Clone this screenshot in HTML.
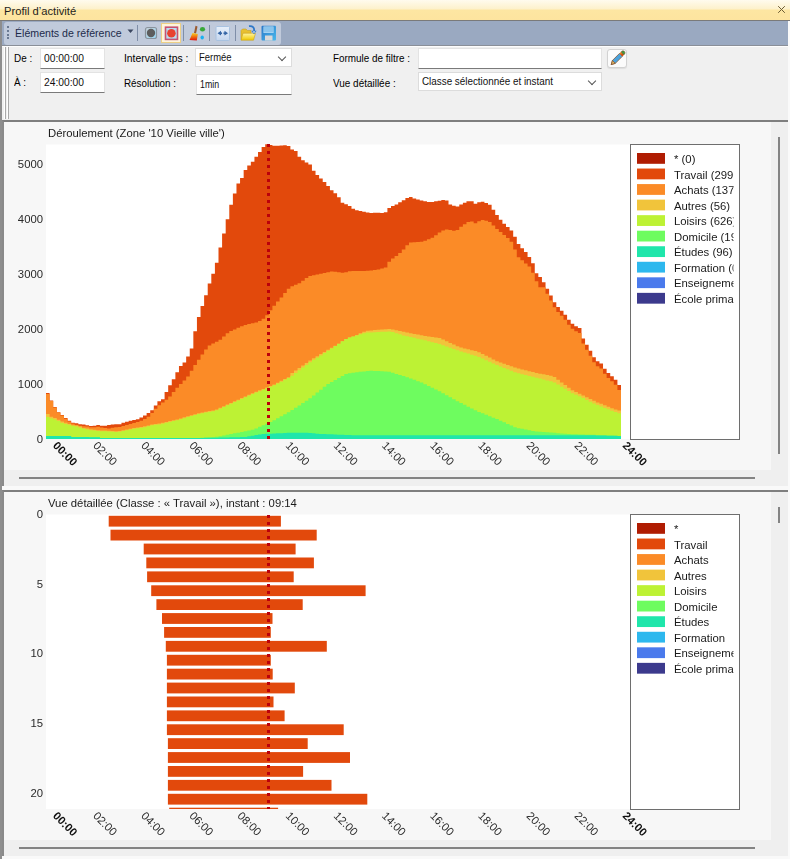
<!DOCTYPE html>
<html><head><meta charset="utf-8">
<style>
*{box-sizing:border-box}
html,body{margin:0;padding:0;width:790px;height:859px;overflow:hidden;background:#f0f0f0;font-family:"Liberation Sans",sans-serif;}
svg.main{will-change:transform}
.a{position:absolute}
#title{left:0;top:0;width:790px;height:21px;background:linear-gradient(#fffbee 0px,#fdf1cb 9px,#fde6a2 10px,#fde49f 20px);border-bottom:1px solid #7a7a7a}
#title span{position:absolute;left:4px;top:5px;font-size:11.2px;color:#1e1e1e}
#close{left:776px;top:4px;width:11px;height:11px}
#lb{left:0;top:21px;width:2px;height:839px;background:#8e8e8e}
#rb{left:788px;top:21px;width:2px;height:839px;background:#fafafa}
#tb{left:2px;top:21px;width:786px;height:25px;background:#9aa9c1;border-bottom:1px solid #8a8f98}
#tbin{left:4px;top:22px;width:277px;height:23px;background:#c0cadb;border-radius:3px}
.grip{left:7px;width:2px;height:2px;background:#6b7a92}
#tbtext{left:15px;top:27px;font-size:10.6px;color:#1d2a4a}
.sep{width:1px;height:16px;top:25px;background:#7f8ea8}
#form{left:2px;top:46px;width:786px;height:74px;background:#f0f0f0;border-top:1px solid #fdfdfd}
.flab{font-size:11px;color:#000;transform:scaleX(.9);transform-origin:0 0;white-space:nowrap}
.inp{background:#fff;border:1px solid #e3e3e3;border-bottom:1px solid #7a7a7a;font-size:11px;color:#111;padding-left:3px;line-height:18px;white-space:nowrap}
.sx{display:inline-block;transform:scaleX(.9);transform-origin:0 50%}
.cmb{background:#fff;border:1px solid #dcdcdc;font-size:11px;color:#111;padding-left:3px;line-height:17px;white-space:nowrap}
.chev{position:absolute;right:6px;top:5px;width:6px;height:6px;border-right:1px solid #555;border-bottom:1px solid #555;transform:rotate(45deg)}
#p1{left:2px;top:120px;width:786px;height:366px;background:#efefef;border-top:2px solid #7f7f7f;border-left:2px solid #8a8a8a}
#p2{left:2px;top:490px;width:786px;height:366px;background:#efefef;border-top:2px solid #7f7f7f;border-left:2px solid #8a8a8a}
#split{left:2px;top:486px;width:786px;height:4px;background:#f9f9f9}
#bot{left:2px;top:856px;width:786px;height:3px;background:#f9f9f9}
svg text{font-family:"Liberation Sans",sans-serif}
.lg{font-size:11.33px;fill:#1a1a1a}
.yl{font-size:11.3px;fill:#2a2a2a;text-anchor:end}
.xl{font-size:11.3px;fill:#2a2a2a}
.xl.b{font-weight:bold;fill:#111}
.ttl{font-size:11.3px;fill:#1a1a1a}
</style></head><body>
<div id="title" class="a"><span>Profil d’activité</span></div>
<svg id="close" class="a" viewBox="0 0 11 11"><path d="M2.2 2.2L8.8 8.8M8.8 2.2L2.2 8.8" stroke="#6b5b33" stroke-width="1"/></svg>
<div id="lb" class="a"></div>
<div id="rb" class="a"></div>
<div id="tb" class="a"></div>
<div id="tbin" class="a"></div>
<div class="a grip" style="top:26px"></div>
<div class="a grip" style="top:30px"></div>
<div class="a grip" style="top:34px"></div>
<div class="a grip" style="top:37px"></div>
<div id="tbtext" class="a">Éléments de référence</div>
<svg class="a" style="left:127px;top:29px" width="7" height="5"><path d="M0.5 0.5H6.5L3.5 4Z" fill="#3a4660"/></svg>
<div class="a sep" style="left:137px"></div>
<!-- icon1 gray circle -->
<svg class="a" style="left:144px;top:26px" width="14" height="14" viewBox="0 0 14 14"><defs><linearGradient id="g1" x1="0" y1="0" x2="1" y2="1"><stop offset="0" stop-color="#c8d0d8"/><stop offset="1" stop-color="#9ad8f4"/></linearGradient></defs><rect x="1.5" y="1.5" width="11" height="11" rx="2" fill="url(#g1)" stroke="#8a949e" stroke-width="1.2"/><circle cx="7" cy="7" r="4.2" fill="#5d5d5d"/></svg>
<!-- icon2 highlighted red -->
<div class="a" style="left:161px;top:23px;width:20px;height:20px;background:#fdf4dc;border:1px solid #eccf86"></div>
<svg class="a" style="left:164px;top:26px" width="15" height="15" viewBox="0 0 15 15"><rect x="1.5" y="1.2" width="12" height="12.2" fill="#b8dcf0" stroke="#c65272" stroke-width="1.6"/><circle cx="7.4" cy="7.2" r="4.3" fill="#e8412f"/></svg>
<div class="a sep" style="left:183px"></div>
<!-- brush -->
<svg class="a" style="left:188px;top:25px" width="18" height="17" viewBox="0 0 18 17"><defs><linearGradient id="gb" x1="0" y1="0" x2="0" y2="1"><stop offset="0" stop-color="#f8d020"/><stop offset="0.5" stop-color="#f07010"/><stop offset="1" stop-color="#e01010"/></linearGradient></defs><path d="M7.5 0.8L9.5 1.4L8 8.5L6 8Z" fill="#9a5a30"/><path d="M4.5 8L9.8 9L8.8 15.5L1.5 15Z" fill="url(#gb)"/><ellipse cx="14.5" cy="4.3" rx="2.6" ry="2.2" fill="#38a838"/><ellipse cx="14.2" cy="12.5" rx="1.7" ry="2.1" fill="#1ab0f0"/></svg>
<div class="a sep" style="left:209px"></div>
<!-- arrows -->
<svg class="a" style="left:215px;top:26px" width="16" height="16" viewBox="0 0 16 16"><defs><linearGradient id="ga" x1="0" y1="0" x2="0" y2="1"><stop offset="0" stop-color="#e8f0fa"/><stop offset="1" stop-color="#c4d6ee"/></linearGradient></defs><rect x="1" y="0.5" width="13.5" height="14" rx="1" fill="url(#ga)" stroke="#a8c2e0"/><path d="M2.5 7.2L6 4.8V9.6Z M13 7.2L9.5 4.8V9.6Z" fill="#3566a6"/><rect x="5" y="6.4" width="2" height="1.7" fill="#3566a6"/><rect x="8.5" y="6.4" width="2" height="1.7" fill="#3566a6"/></svg>
<div class="a sep" style="left:235px"></div>
<!-- folder -->
<svg class="a" style="left:240px;top:25px" width="17" height="17" viewBox="0 0 17 17"><defs><linearGradient id="gf" x1="0" y1="0" x2="0" y2="1"><stop offset="0" stop-color="#fff4a0"/><stop offset="1" stop-color="#f0c800"/></linearGradient></defs><path d="M1 14.5V5.5L2.5 4H6L7.5 5.5H11V14.5Z" fill="#e8c030" stroke="#c8a020" stroke-width="0.6"/><path d="M1 15.2L3 8.2H15.5L13.5 15.2Z" fill="url(#gf)" stroke="#c8a020" stroke-width="0.6"/><path d="M9 1.2C12.5 0.6 14.8 2.6 14 6.5" stroke="#2e78c8" stroke-width="1.8" fill="none"/><path d="M11.3 5.8L14 9.2L16.6 5.8Z" fill="#2e78c8"/><path d="M12.6 6.4L14 8L15.3 6.4Z" fill="#ffffff"/></svg>
<!-- floppy -->
<svg class="a" style="left:261px;top:25px" width="16" height="16" viewBox="0 0 16 16"><defs><linearGradient id="gfl" x1="0" y1="0" x2="1" y2="1"><stop offset="0" stop-color="#2a78c8"/><stop offset="1" stop-color="#48b8ec"/></linearGradient></defs><rect x="0.5" y="0.8" width="14.5" height="14.7" rx="1" fill="url(#gfl)"/><rect x="2.5" y="1.5" width="10" height="6.5" fill="#bfe0f6"/><rect x="3" y="2" width="9" height="5.5" fill="#8ac4ec"/><rect x="4" y="10.5" width="7.5" height="5" fill="#d8d8d8"/></svg>

<div id="form" class="a"></div>
<div class="a" style="left:4px;top:47px;width:1px;height:72px;background:#fff"></div>
<div class="a" style="left:5px;top:47px;width:1px;height:72px;background:#a9a9a9"></div>
<div class="a" style="left:7px;top:47px;width:1px;height:72px;background:#fff"></div>
<div class="a" style="left:8px;top:47px;width:1px;height:72px;background:#a9a9a9"></div>

<div class="a flab" style="left:14px;top:52px">De :</div>
<div class="a inp" style="left:40px;top:48px;width:65px;height:21px"><span class="sx" style="transform:scaleX(0.934)">00:00:00</span></div>
<div class="a flab" style="left:14px;top:76px">À :</div>
<div class="a inp" style="left:40px;top:72px;width:65px;height:21px"><span class="sx" style="transform:scaleX(0.934)">24:00:00</span></div>
<div class="a flab" style="transform:scaleX(0.940);left:124px;top:52px">Intervalle tps :</div>
<div class="a cmb" style="left:195px;top:48px;width:97px;height:19px"><span class="sx" style="transform:scaleX(0.860)">Fermée</span><span class="chev"></span></div>
<div class="a flab" style="transform:scaleX(0.895);left:124px;top:77px">Résolution :</div>
<div class="a inp" style="left:196px;top:74px;width:96px;height:21px"><span class="sx" style="transform:scaleX(0.800)">1min</span></div>
<div class="a flab" style="transform:scaleX(0.900);left:333px;top:52px">Formule de filtre :</div>
<div class="a inp" style="left:418px;top:48px;width:184px;height:21px"></div>
<div class="a flab" style="transform:scaleX(0.905);left:333px;top:77px">Vue détaillée :</div>
<div class="a cmb" style="left:418px;top:72px;width:184px;height:19px"><span class="sx" style="transform:scaleX(0.896)">Classe sélectionnée et instant</span><span class="chev"></span></div>
<div class="a" style="left:607px;top:49px;width:20px;height:19px;background:#fbfbfb;border:1px solid #d2d2d2;border-radius:3px;box-shadow:0 1px 1px rgba(0,0,0,0.08)"></div>
<svg class="a" style="left:602px;top:44px" width="30" height="30" viewBox="0 0 30 30"><g transform="translate(15.2,14.6) rotate(-45) scale(0.85)"><path d="M-10 0L-5.5 -2.4H6.2V2.4H-5.5Z" fill="#4aa2dc" stroke="#7a4a28" stroke-width="0.8"/><path d="M-10 0L-5.5 -2.4V2.4Z" fill="#dcb060" stroke="#7a4a28" stroke-width="0.7"/><rect x="6.2" y="-2.4" width="2.6" height="4.8" fill="#e07a18"/><rect x="6.2" y="0" width="2.6" height="2.4" fill="#d24a10"/><path d="M8.8 -2.4H9.6A2.4 2.4 0 0 1 9.6 2.4H8.8Z" fill="#3e9a3e" stroke="#7a4a28" stroke-width="0.6"/></g></svg>
<!-- Chart panel 1 -->
<div id="p1" class="a"></div>
<div class="a" style="left:4px;top:122px;width:767px;height:348px;background:#f7f7f7"></div>
<div class="a" style="left:19px;top:477px;width:736px;height:2px;background:#838383"></div>
<div class="a" style="left:778px;top:137px;width:2px;height:317px;background:#838383"></div>
<div id="split" class="a"></div>
<div id="p2" class="a"></div>
<div class="a" style="left:4px;top:492px;width:767px;height:348px;background:#f7f7f7"></div>
<div class="a" style="left:19px;top:847px;width:736px;height:2px;background:#838383"></div>
<div class="a" style="left:778px;top:507px;width:2px;height:16px;background:#838383"></div>
<div id="bot" class="a"></div>

<svg class="a main" style="left:0;top:0" width="790" height="859">
<rect x="46" y="144.5" width="584" height="294.5" fill="#fff"/>
<text x="48" y="137" class="ttl">Déroulement (Zone '10 Vieille ville')</text>
<text x="43" y="167.5" class="yl">5000</text>
<text x="43" y="222.5" class="yl">4000</text>
<text x="43" y="277.5" class="yl">3000</text>
<text x="43" y="332.5" class="yl">2000</text>
<text x="43" y="387.5" class="yl">1000</text>
<text x="43" y="443" class="yl">0</text>
<polygon points="46.00,393.00 49.59,393.00 49.59,400.38 53.19,400.38 53.19,407.07 56.78,407.07 56.78,412.17 60.38,412.17 60.38,414.88 63.97,414.88 63.97,417.97 67.56,417.97 67.56,420.77 71.16,420.77 71.16,422.77 74.75,422.77 74.75,423.29 78.34,423.29 78.34,424.28 81.94,424.28 81.94,424.49 85.53,424.49 85.53,425.30 89.12,425.30 89.12,425.92 92.72,425.92 92.72,425.67 96.31,425.67 96.31,425.07 99.91,425.07 99.91,425.78 103.50,425.78 103.50,425.68 107.09,425.68 107.09,425.02 110.69,425.02 110.69,424.59 114.28,424.59 114.28,424.30 117.88,424.30 117.88,424.30 121.47,424.30 121.47,422.66 125.06,422.66 125.06,421.68 128.66,421.68 128.66,420.71 132.25,420.71 132.25,419.91 135.84,419.91 135.84,419.13 139.44,419.13 139.44,417.43 143.03,417.43 143.03,415.54 146.62,415.54 146.62,413.07 150.22,413.07 150.22,410.25 153.81,410.25 153.81,405.49 157.41,405.49 157.41,401.22 161.00,401.22 161.00,399.20 164.59,399.20 164.59,392.02 168.19,392.02 168.19,385.33 171.78,385.33 171.78,379.34 175.38,379.34 175.38,372.36 178.97,372.36 178.97,366.03 182.56,366.03 182.56,362.44 186.16,362.44 186.16,356.49 189.75,356.49 189.75,348.55 193.34,348.55 193.34,331.16 196.94,331.16 196.94,316.90 200.53,316.90 200.53,306.12 204.12,306.12 204.12,295.15 207.72,295.15 207.72,283.58 211.31,283.58 211.31,273.64 214.91,273.64 214.91,262.79 218.50,262.79 218.50,247.38 222.09,247.38 222.09,233.38 225.69,233.38 225.69,219.33 229.28,219.33 229.28,204.64 232.88,204.64 232.88,193.50 236.47,193.50 236.47,183.40 240.06,183.40 240.06,177.88 243.66,177.88 243.66,170.02 247.25,170.02 247.25,165.41 250.84,165.41 250.84,161.86 254.44,161.86 254.44,156.63 258.03,156.63 258.03,151.89 261.62,151.89 261.62,147.08 265.22,147.08 265.22,144.25 268.81,144.25 268.81,145.00 272.41,145.00 272.41,145.81 276.00,145.81 276.00,145.86 279.59,145.86 279.59,145.38 283.19,145.38 283.19,145.30 286.78,145.30 286.78,146.01 290.38,146.01 290.38,149.60 293.97,149.60 293.97,150.89 297.56,150.89 297.56,156.85 301.16,156.85 301.16,160.36 304.75,160.36 304.75,162.57 308.34,162.57 308.34,164.54 311.94,164.54 311.94,170.74 315.53,170.74 315.53,174.98 319.12,174.98 319.12,178.52 322.72,178.52 322.72,182.12 326.31,182.12 326.31,186.03 329.91,186.03 329.91,190.19 333.50,190.19 333.50,193.24 337.09,193.24 337.09,197.35 340.69,197.35 340.69,202.82 344.28,202.82 344.28,204.32 347.88,204.32 347.88,206.10 351.47,206.10 351.47,208.87 355.06,208.87 355.06,210.29 358.66,210.29 358.66,210.91 362.25,210.91 362.25,211.69 365.84,211.69 365.84,212.59 369.44,212.59 369.44,213.02 373.03,213.02 373.03,212.83 376.62,212.83 376.62,212.76 380.22,212.76 380.22,212.95 383.81,212.95 383.81,212.26 387.41,212.26 387.41,207.99 391.00,207.99 391.00,206.09 394.59,206.09 394.59,204.54 398.19,204.54 398.19,202.34 401.78,202.34 401.78,200.17 405.38,200.17 405.38,198.04 408.97,198.04 408.97,197.07 412.56,197.07 412.56,198.52 416.16,198.52 416.16,199.56 419.75,199.56 419.75,200.46 423.34,200.46 423.34,201.24 426.94,201.24 426.94,201.95 430.53,201.95 430.53,201.97 434.12,201.97 434.12,201.33 437.72,201.33 437.72,200.69 441.31,200.69 441.31,199.95 444.91,199.95 444.91,200.51 448.50,200.51 448.50,204.49 452.09,204.49 452.09,205.75 455.69,205.75 455.69,206.58 459.28,206.58 459.28,204.57 462.88,204.57 462.88,202.81 466.47,202.81 466.47,201.30 470.06,201.30 470.06,201.37 473.66,201.37 473.66,203.77 477.25,203.77 477.25,202.26 480.84,202.26 480.84,201.76 484.44,201.76 484.44,203.06 488.03,203.06 488.03,204.77 491.62,204.77 491.62,209.63 495.22,209.63 495.22,215.02 498.81,215.02 498.81,219.81 502.41,219.81 502.41,223.86 506.00,223.86 506.00,226.88 509.59,226.88 509.59,230.39 513.19,230.39 513.19,236.87 516.78,236.87 516.78,244.06 520.38,244.06 520.38,248.26 523.97,248.26 523.97,251.90 527.56,251.90 527.56,257.08 531.16,257.08 531.16,263.32 534.75,263.32 534.75,273.20 538.34,273.20 538.34,276.89 541.94,276.89 541.94,282.13 545.53,282.13 545.53,288.65 549.12,288.65 549.12,295.44 552.72,295.44 552.72,302.22 556.31,302.22 556.31,307.01 559.91,307.01 559.91,310.67 563.50,310.67 563.50,314.75 567.09,314.75 567.09,319.70 570.69,319.70 570.69,323.73 574.28,323.73 574.28,326.14 577.88,326.14 577.88,328.09 581.47,328.09 581.47,338.57 585.06,338.57 585.06,344.86 588.66,344.86 588.66,350.80 592.25,350.80 592.25,357.23 595.84,357.23 595.84,361.35 599.44,361.35 599.44,363.41 603.03,363.41 603.03,368.67 606.62,368.67 606.62,372.92 610.22,372.92 610.22,376.34 613.81,376.34 613.81,379.76 617.41,379.76 617.41,384.98 621.00,384.98 621.00,439.00 46.00,439.00" fill="#e2490c"/>
<polygon points="46.00,394.00 49.59,394.00 49.59,400.98 53.19,400.98 53.19,407.60 56.78,407.60 56.78,412.44 60.38,412.44 60.38,415.57 63.97,415.57 63.97,418.63 67.56,418.63 67.56,421.39 71.16,421.39 71.16,423.45 74.75,423.45 74.75,424.78 78.34,424.78 78.34,425.67 81.94,425.67 81.94,426.17 85.53,426.17 85.53,426.53 89.12,426.53 89.12,427.18 92.72,427.18 92.72,427.36 96.31,427.36 96.31,426.82 99.91,426.82 99.91,427.39 103.50,427.39 103.50,428.06 107.09,428.06 107.09,428.42 110.69,428.42 110.69,427.70 114.28,427.70 114.28,427.34 117.88,427.34 117.88,427.03 121.47,427.03 121.47,426.00 125.06,426.00 125.06,424.97 128.66,424.97 128.66,424.05 132.25,424.05 132.25,423.08 135.84,423.08 135.84,422.05 139.44,422.05 139.44,420.75 143.03,420.75 143.03,418.97 146.62,418.97 146.62,416.87 150.22,416.87 150.22,413.01 153.81,413.01 153.81,408.66 157.41,408.66 157.41,405.34 161.00,405.34 161.00,402.58 164.59,402.58 164.59,399.82 168.19,399.82 168.19,396.42 171.78,396.42 171.78,392.11 175.38,392.11 175.38,387.79 178.97,387.79 178.97,384.03 182.56,384.03 182.56,380.44 186.16,380.44 186.16,376.57 189.75,376.57 189.75,370.82 193.34,370.82 193.34,365.08 196.94,365.08 196.94,359.63 200.53,359.63 200.53,354.51 204.12,354.51 204.12,349.39 207.72,349.39 207.72,345.39 211.31,345.39 211.31,343.60 214.91,343.60 214.91,341.80 218.50,341.80 218.50,339.77 222.09,339.77 222.09,336.55 225.69,336.55 225.69,333.34 229.28,333.34 229.28,330.97 232.88,330.97 232.88,329.39 236.47,329.39 236.47,327.80 240.06,327.80 240.06,326.22 243.66,326.22 243.66,324.88 247.25,324.88 247.25,324.12 250.84,324.12 250.84,323.37 254.44,323.37 254.44,322.61 258.03,322.61 258.03,320.96 261.62,320.96 261.62,318.69 265.22,318.69 265.22,315.15 268.81,315.15 268.81,310.23 272.41,310.23 272.41,305.63 276.00,305.63 276.00,301.56 279.59,301.56 279.59,297.43 283.19,297.43 283.19,293.12 286.78,293.12 286.78,288.81 290.38,288.81 290.38,286.23 293.97,286.23 293.97,284.79 297.56,284.79 297.56,283.36 301.16,283.36 301.16,280.76 304.75,280.76 304.75,278.11 308.34,278.11 308.34,276.06 311.94,276.06 311.94,275.30 315.53,275.30 315.53,274.55 319.12,274.55 319.12,273.79 322.72,273.79 322.72,273.00 326.31,273.00 326.31,272.21 329.91,272.21 329.91,271.42 333.50,271.42 333.50,271.86 337.09,271.86 337.09,272.33 340.69,272.33 340.69,272.81 344.28,272.81 344.28,272.18 347.88,272.18 347.88,271.28 351.47,271.28 351.47,271.00 355.06,271.00 355.06,271.00 358.66,271.00 358.66,271.00 362.25,271.00 362.25,271.00 365.84,271.00 365.84,270.81 369.44,270.81 369.44,270.40 373.03,270.40 373.03,269.98 376.62,269.98 376.62,269.40 380.22,269.40 380.22,268.46 383.81,268.46 383.81,267.51 387.41,267.51 387.41,261.73 391.00,261.73 391.00,258.52 394.59,258.52 394.59,256.11 398.19,256.11 398.19,253.12 401.78,253.12 401.78,249.52 405.38,249.52 405.38,245.35 408.97,245.35 408.97,242.42 412.56,242.42 412.56,242.18 416.16,242.18 416.16,241.93 419.75,241.93 419.75,241.69 423.34,241.69 423.34,240.70 426.94,240.70 426.94,239.27 430.53,239.27 430.53,237.83 434.12,237.83 434.12,235.16 437.72,235.16 437.72,232.46 441.31,232.46 441.31,230.52 444.91,230.52 444.91,229.38 448.50,229.38 448.50,230.04 452.09,230.04 452.09,230.70 455.69,230.70 455.69,229.92 459.28,229.92 459.28,226.86 462.88,226.86 462.88,224.24 466.47,224.24 466.47,222.02 470.06,222.02 470.06,221.57 473.66,221.57 473.66,223.30 477.25,223.30 477.25,221.26 480.84,221.26 480.84,219.91 484.44,219.91 484.44,220.81 488.03,220.81 488.03,222.03 491.62,222.03 491.62,225.62 495.22,225.62 495.22,228.91 498.81,228.91 498.81,231.94 502.41,231.94 502.41,234.91 506.00,234.91 506.00,238.12 509.59,238.12 509.59,241.76 513.19,241.76 513.19,249.60 516.78,249.60 516.78,257.25 520.38,257.25 520.38,260.35 523.97,260.35 523.97,263.41 527.56,263.41 527.56,266.58 531.16,266.58 531.16,272.82 534.75,272.82 534.75,281.32 538.34,281.32 538.34,287.14 541.94,287.14 541.94,287.13 545.53,287.13 545.53,293.65 549.12,293.65 549.12,300.44 552.72,300.44 552.72,307.22 556.31,307.22 556.31,312.01 559.91,312.01 559.91,315.67 563.50,315.67 563.50,319.75 567.09,319.75 567.09,324.70 570.69,324.70 570.69,328.73 574.28,328.73 574.28,331.14 577.88,331.14 577.88,333.09 581.47,333.09 581.47,343.57 585.06,343.57 585.06,349.86 588.66,349.86 588.66,355.80 592.25,355.80 592.25,362.23 595.84,362.23 595.84,366.35 599.44,366.35 599.44,368.41 603.03,368.41 603.03,373.67 606.62,373.67 606.62,377.92 610.22,377.92 610.22,381.34 613.81,381.34 613.81,384.76 617.41,384.76 617.41,389.98 621.00,389.98 621.00,439.00 46.00,439.00" fill="#fb8b27"/>
<polygon points="46.00,414.00 49.59,414.00 49.59,416.83 53.19,416.83 53.19,417.94 56.78,417.94 56.78,419.78 60.38,419.78 60.38,421.54 63.97,421.54 63.97,422.68 67.56,422.68 67.56,424.08 71.16,424.08 71.16,425.37 74.75,425.37 74.75,425.60 78.34,425.60 78.34,426.61 81.94,426.61 81.94,428.27 85.53,428.27 85.53,428.60 89.12,428.60 89.12,429.37 92.72,429.37 92.72,429.82 96.31,429.82 96.31,430.13 99.91,430.13 99.91,430.39 103.50,430.39 103.50,430.56 107.09,430.56 107.09,430.76 110.69,430.76 110.69,431.02 114.28,431.02 114.28,431.16 117.88,431.16 117.88,431.01 121.47,431.01 121.47,430.25 125.06,430.25 125.06,429.44 128.66,429.44 128.66,428.66 132.25,428.66 132.25,428.00 135.84,428.00 135.84,427.51 139.44,427.51 139.44,426.97 143.03,426.97 143.03,426.34 146.62,426.34 146.62,425.46 150.22,425.46 150.22,424.52 153.81,424.52 153.81,424.06 157.41,424.06 157.41,423.60 161.00,423.60 161.00,422.83 164.59,422.83 164.59,421.97 168.19,421.97 168.19,421.11 171.78,421.11 171.78,420.26 175.38,420.26 175.38,419.40 178.97,419.40 178.97,418.38 182.56,418.38 182.56,417.33 186.16,417.33 186.16,416.27 189.75,416.27 189.75,415.21 193.34,415.21 193.34,414.15 196.94,414.15 196.94,413.25 200.53,413.25 200.53,412.53 204.12,412.53 204.12,411.82 207.72,411.82 207.72,411.10 211.31,411.10 211.31,410.38 214.91,410.38 214.91,409.48 218.50,409.48 218.50,407.84 222.09,407.84 222.09,406.21 225.69,406.21 225.69,404.57 229.28,404.57 229.28,402.94 232.88,402.94 232.88,401.30 236.47,401.30 236.47,399.69 240.06,399.69 240.06,398.09 243.66,398.09 243.66,396.48 247.25,396.48 247.25,394.87 250.84,394.87 250.84,393.26 254.44,393.26 254.44,391.77 258.03,391.77 258.03,390.33 261.62,390.33 261.62,388.89 265.22,388.89 265.22,387.45 268.81,387.45 268.81,386.02 272.41,386.02 272.41,384.44 276.00,384.44 276.00,382.64 279.59,382.64 279.59,380.83 283.19,380.83 283.19,379.02 286.78,379.02 286.78,377.22 290.38,377.22 290.38,372.98 293.97,372.98 293.97,370.46 297.56,370.46 297.56,367.95 301.16,367.95 301.16,365.43 304.75,365.43 304.75,362.92 308.34,362.92 308.34,360.52 311.94,360.52 311.94,358.36 315.53,358.36 315.53,356.20 319.12,356.20 319.12,354.05 322.72,354.05 322.72,351.89 326.31,351.89 326.31,349.74 329.91,349.74 329.91,347.77 333.50,347.77 333.50,345.81 337.09,345.81 337.09,343.69 340.69,343.69 340.69,341.35 344.28,341.35 344.28,339.00 347.88,339.00 347.88,337.60 351.47,337.60 351.47,336.52 355.06,336.52 355.06,334.94 358.66,334.94 358.66,333.31 362.25,333.31 362.25,331.68 365.84,331.68 365.84,330.67 369.44,330.67 369.44,330.40 373.03,330.40 373.03,330.12 376.62,330.12 376.62,329.84 380.22,329.84 380.22,329.56 383.81,329.56 383.81,329.29 387.41,329.29 387.41,329.01 391.00,329.01 391.00,329.38 394.59,329.38 394.59,330.16 398.19,330.16 398.19,330.95 401.78,330.95 401.78,331.73 405.38,331.73 405.38,332.45 408.97,332.45 408.97,333.17 412.56,333.17 412.56,333.89 416.16,333.89 416.16,334.61 419.75,334.61 419.75,335.33 423.34,335.33 423.34,335.91 426.94,335.91 426.94,336.42 430.53,336.42 430.53,336.92 434.12,336.92 434.12,337.43 437.72,337.43 437.72,337.93 441.31,337.93 441.31,339.47 444.91,339.47 444.91,341.18 448.50,341.18 448.50,342.88 452.09,342.88 452.09,344.58 455.69,344.58 455.69,346.28 459.28,346.28 459.28,347.51 462.88,347.51 462.88,348.40 466.47,348.40 466.47,349.29 470.06,349.29 470.06,350.18 473.66,350.18 473.66,351.07 477.25,351.07 477.25,352.22 480.84,352.22 480.84,354.02 484.44,354.02 484.44,355.82 488.03,355.82 488.03,357.61 491.62,357.61 491.62,359.41 495.22,359.41 495.22,361.21 498.81,361.21 498.81,362.46 502.41,362.46 502.41,363.72 506.00,363.72 506.00,364.97 509.59,364.97 509.59,366.23 513.19,366.23 513.19,367.48 516.78,367.48 516.78,368.48 520.38,368.48 520.38,369.38 523.97,369.38 523.97,370.29 527.56,370.29 527.56,371.20 531.16,371.20 531.16,372.11 534.75,372.11 534.75,372.93 538.34,372.93 538.34,373.65 541.94,373.65 541.94,374.37 545.53,374.37 545.53,375.09 549.12,375.09 549.12,375.80 552.72,375.80 552.72,376.88 556.31,376.88 556.31,379.71 559.91,379.71 559.91,382.44 563.50,382.44 563.50,385.06 567.09,385.06 567.09,387.68 570.69,387.68 570.69,390.30 574.28,390.30 574.28,391.99 577.88,391.99 577.88,393.68 581.47,393.68 581.47,395.47 585.06,395.47 585.06,397.25 588.66,397.25 588.66,399.04 592.25,399.04 592.25,400.83 595.84,400.83 595.84,402.40 599.44,402.40 599.44,403.84 603.03,403.84 603.03,405.28 606.62,405.28 606.62,406.72 610.22,406.72 610.22,408.17 613.81,408.17 613.81,409.43 617.41,409.43 617.41,410.61 621.00,410.61 621.00,439.00 46.00,439.00" fill="#f1c43b"/>
<polygon points="46.00,417.00 49.59,417.00 49.59,418.60 53.19,418.60 53.19,419.45 56.78,419.45 56.78,421.10 60.38,421.10 60.38,423.01 63.97,423.01 63.97,423.91 67.56,423.91 67.56,424.85 71.16,424.85 71.16,425.66 74.75,425.66 74.75,426.62 78.34,426.62 78.34,427.64 81.94,427.64 81.94,428.58 85.53,428.58 85.53,429.40 89.12,429.40 89.12,430.17 92.72,430.17 92.72,430.62 96.31,430.62 96.31,430.93 99.91,430.93 99.91,431.19 103.50,431.19 103.50,431.36 107.09,431.36 107.09,431.56 110.69,431.56 110.69,431.82 114.28,431.82 114.28,431.96 117.88,431.96 117.88,431.81 121.47,431.81 121.47,431.05 125.06,431.05 125.06,430.24 128.66,430.24 128.66,429.46 132.25,429.46 132.25,428.80 135.84,428.80 135.84,428.31 139.44,428.31 139.44,427.77 143.03,427.77 143.03,427.14 146.62,427.14 146.62,426.26 150.22,426.26 150.22,425.32 153.81,425.32 153.81,424.86 157.41,424.86 157.41,424.40 161.00,424.40 161.00,423.63 164.59,423.63 164.59,422.77 168.19,422.77 168.19,421.91 171.78,421.91 171.78,421.06 175.38,421.06 175.38,420.20 178.97,420.20 178.97,419.18 182.56,419.18 182.56,418.13 186.16,418.13 186.16,417.07 189.75,417.07 189.75,416.01 193.34,416.01 193.34,414.95 196.94,414.95 196.94,414.05 200.53,414.05 200.53,413.33 204.12,413.33 204.12,412.62 207.72,412.62 207.72,411.90 211.31,411.90 211.31,411.18 214.91,411.18 214.91,410.28 218.50,410.28 218.50,408.64 222.09,408.64 222.09,407.01 225.69,407.01 225.69,405.37 229.28,405.37 229.28,403.74 232.88,403.74 232.88,402.10 236.47,402.10 236.47,400.49 240.06,400.49 240.06,398.89 243.66,398.89 243.66,397.28 247.25,397.28 247.25,395.67 250.84,395.67 250.84,394.06 254.44,394.06 254.44,392.57 258.03,392.57 258.03,391.13 261.62,391.13 261.62,389.69 265.22,389.69 265.22,388.25 268.81,388.25 268.81,386.82 272.41,386.82 272.41,385.24 276.00,385.24 276.00,383.44 279.59,383.44 279.59,381.63 283.19,381.63 283.19,379.82 286.78,379.82 286.78,378.02 290.38,378.02 290.38,375.68 293.97,375.68 293.97,372.99 297.56,372.99 297.56,370.31 301.16,370.31 301.16,367.62 304.75,367.62 304.75,364.93 308.34,364.93 308.34,362.36 311.94,362.36 311.94,360.04 315.53,360.04 315.53,357.71 319.12,357.71 319.12,355.38 322.72,355.38 322.72,353.06 326.31,353.06 326.31,350.73 329.91,350.73 329.91,348.38 333.50,348.38 333.50,346.04 337.09,346.04 337.09,343.69 340.69,343.69 340.69,341.35 344.28,341.35 344.28,339.00 347.88,339.00 347.88,337.60 351.47,337.60 351.47,336.52 355.06,336.52 355.06,335.44 358.66,335.44 358.66,334.36 362.25,334.36 362.25,333.29 365.84,333.29 365.84,332.61 369.44,332.61 369.44,332.42 373.03,332.42 373.03,332.23 376.62,332.23 376.62,332.04 380.22,332.04 380.22,331.85 383.81,331.85 383.81,331.66 387.41,331.66 387.41,331.47 391.00,331.47 391.00,332.09 394.59,332.09 394.59,333.23 398.19,333.23 398.19,334.36 401.78,334.36 401.78,335.50 405.38,335.50 405.38,336.31 408.97,336.31 408.97,337.08 412.56,337.08 412.56,337.86 416.16,337.86 416.16,338.63 419.75,338.63 419.75,339.41 423.34,339.41 423.34,340.28 426.94,340.28 426.94,341.20 430.53,341.20 430.53,342.13 434.12,342.13 434.12,343.05 437.72,343.05 437.72,343.98 441.31,343.98 441.31,345.20 444.91,345.20 444.91,346.46 448.50,346.46 448.50,347.73 452.09,347.73 452.09,349.00 455.69,349.00 455.69,350.27 459.28,350.27 459.28,351.42 462.88,351.42 462.88,352.50 466.47,352.50 466.47,353.58 470.06,353.58 470.06,354.66 473.66,354.66 473.66,355.74 477.25,355.74 477.25,356.97 480.84,356.97 480.84,358.58 484.44,358.58 484.44,360.18 488.03,360.18 488.03,361.79 491.62,361.79 491.62,363.40 495.22,363.40 495.22,365.01 498.81,365.01 498.81,366.45 502.41,366.45 502.41,367.90 506.00,367.90 506.00,369.34 509.59,369.34 509.59,370.79 513.19,370.79 513.19,372.23 516.78,372.23 516.78,373.26 520.38,373.26 520.38,374.15 523.97,374.15 523.97,375.04 527.56,375.04 527.56,375.93 531.16,375.93 531.16,376.82 534.75,376.82 534.75,377.72 538.34,377.72 538.34,378.62 541.94,378.62 541.94,379.53 545.53,379.53 545.53,380.44 549.12,380.44 549.12,381.35 552.72,381.35 552.72,382.45 556.31,382.45 556.31,384.52 559.91,384.52 559.91,386.64 563.50,386.64 563.50,388.84 567.09,388.84 567.09,391.04 570.69,391.04 570.69,393.25 574.28,393.25 574.28,394.69 577.88,394.69 577.88,396.29 581.47,396.29 581.47,398.10 585.06,398.10 585.06,399.91 588.66,399.91 588.66,401.71 592.25,401.71 592.25,403.52 595.84,403.52 595.84,405.09 599.44,405.09 599.44,406.51 603.03,406.51 603.03,407.93 606.62,407.93 606.62,409.35 610.22,409.35 610.22,410.77 613.81,410.77 613.81,412.06 617.41,412.06 617.41,413.29 621.00,413.29 621.00,439.00 46.00,439.00" fill="#bdf234"/>
<polygon points="46.00,436.00 49.59,436.00 49.59,436.00 53.19,436.00 53.19,436.00 56.78,436.00 56.78,436.00 60.38,436.00 60.38,436.00 63.97,436.00 63.97,436.00 67.56,436.00 67.56,436.00 71.16,436.00 71.16,436.96 74.75,436.96 74.75,437.03 78.34,437.03 78.34,437.05 81.94,437.05 81.94,437.08 85.53,437.08 85.53,437.11 89.12,437.11 89.12,437.13 92.72,437.13 92.72,437.16 96.31,437.16 96.31,437.19 99.91,437.19 99.91,438.00 103.50,438.00 103.50,438.00 107.09,438.00 107.09,438.00 110.69,438.00 110.69,438.00 114.28,438.00 114.28,438.00 117.88,438.00 117.88,438.00 121.47,438.00 121.47,438.00 125.06,438.00 125.06,438.00 128.66,438.00 128.66,438.00 132.25,438.00 132.25,438.00 135.84,438.00 135.84,438.00 139.44,438.00 139.44,438.00 143.03,438.00 143.03,438.00 146.62,438.00 146.62,438.00 150.22,438.00 150.22,438.00 153.81,438.00 153.81,438.00 157.41,438.00 157.41,438.00 161.00,438.00 161.00,438.00 164.59,438.00 164.59,438.00 168.19,438.00 168.19,438.00 171.78,438.00 171.78,438.00 175.38,438.00 175.38,438.00 178.97,438.00 178.97,438.00 182.56,438.00 182.56,438.00 186.16,438.00 186.16,438.00 189.75,438.00 189.75,438.00 193.34,438.00 193.34,438.00 196.94,438.00 196.94,438.00 200.53,438.00 200.53,437.85 204.12,437.85 204.12,437.63 207.72,437.63 207.72,437.41 211.31,437.41 211.31,437.18 214.91,437.18 214.91,436.86 218.50,436.86 218.50,436.16 222.09,436.16 222.09,435.46 225.69,435.46 225.69,434.75 229.28,434.75 229.28,434.05 232.88,434.05 232.88,433.34 236.47,433.34 236.47,432.63 240.06,432.63 240.06,431.91 243.66,431.91 243.66,431.19 247.25,431.19 247.25,430.47 250.84,430.47 250.84,429.75 254.44,429.75 254.44,428.46 258.03,428.46 258.03,426.85 261.62,426.85 261.62,425.24 265.22,425.24 265.22,423.63 268.81,423.63 268.81,422.02 272.41,422.02 272.41,420.28 276.00,420.28 276.00,418.28 279.59,418.28 279.59,416.28 283.19,416.28 283.19,414.29 286.78,414.29 286.78,412.29 290.38,412.29 290.38,410.09 293.97,410.09 293.97,407.77 297.56,407.77 297.56,405.44 301.16,405.44 301.16,403.11 304.75,403.11 304.75,400.79 308.34,400.79 308.34,398.29 311.94,398.29 311.94,395.41 315.53,395.41 315.53,392.54 319.12,392.54 319.12,389.66 322.72,389.66 322.72,386.79 326.31,386.79 326.31,383.94 329.91,383.94 329.91,381.95 333.50,381.95 333.50,379.97 337.09,379.97 337.09,377.98 340.69,377.98 340.69,376.00 344.28,376.00 344.28,374.01 347.88,374.01 347.88,373.17 351.47,373.17 351.47,372.73 355.06,372.73 355.06,372.28 358.66,372.28 358.66,371.84 362.25,371.84 362.25,371.40 365.84,371.40 365.84,370.95 369.44,370.95 369.44,370.77 373.03,370.77 373.03,370.94 376.62,370.94 376.62,371.11 380.22,371.11 380.22,371.28 383.81,371.28 383.81,371.45 387.41,371.45 387.41,371.75 391.00,371.75 391.00,372.83 394.59,372.83 394.59,373.91 398.19,373.91 398.19,374.99 401.78,374.99 401.78,376.06 405.38,376.06 405.38,377.14 408.97,377.14 408.97,378.45 412.56,378.45 412.56,379.80 416.16,379.80 416.16,381.14 419.75,381.14 419.75,382.49 423.34,382.49 423.34,384.13 426.94,384.13 426.94,385.93 430.53,385.93 430.53,387.74 434.12,387.74 434.12,389.55 437.72,389.55 437.72,391.36 441.31,391.36 441.31,393.30 444.91,393.30 444.91,395.27 448.50,395.27 448.50,397.24 452.09,397.24 452.09,399.20 455.69,399.20 455.69,401.17 459.28,401.17 459.28,403.04 462.88,403.04 462.88,404.84 466.47,404.84 466.47,406.63 470.06,406.63 470.06,408.43 473.66,408.43 473.66,410.23 477.25,410.23 477.25,411.92 480.84,411.92 480.84,413.36 484.44,413.36 484.44,414.79 488.03,414.79 488.03,416.23 491.62,416.23 491.62,417.67 495.22,417.67 495.22,419.11 498.81,419.11 498.81,420.72 502.41,420.72 502.41,422.34 506.00,422.34 506.00,423.96 509.59,423.96 509.59,425.57 513.19,425.57 513.19,427.19 516.78,427.19 516.78,428.14 520.38,428.14 520.38,428.85 523.97,428.85 523.97,429.57 527.56,429.57 527.56,430.29 531.16,430.29 531.16,431.01 534.75,431.01 534.75,431.52 538.34,431.52 538.34,431.79 541.94,431.79 541.94,432.05 545.53,432.05 545.53,432.32 549.12,432.32 549.12,432.58 552.72,432.58 552.72,432.85 556.31,432.85 556.31,433.13 559.91,433.13 559.91,433.42 563.50,433.42 563.50,433.70 567.09,433.70 567.09,433.98 570.69,433.98 570.69,434.27 574.28,434.27 574.28,434.37 577.88,434.37 577.88,434.46 581.47,434.46 581.47,434.54 585.06,434.54 585.06,434.63 588.66,434.63 588.66,434.72 592.25,434.72 592.25,434.87 595.84,434.87 595.84,435.02 599.44,435.02 599.44,435.17 603.03,435.17 603.03,435.32 606.62,435.32 606.62,435.47 610.22,435.47 610.22,435.62 613.81,435.62 613.81,435.77 617.41,435.77 617.41,435.92 621.00,435.92 621.00,439.00 46.00,439.00" fill="#6efc5f"/>
<polygon points="46.00,436.00 49.59,436.00 49.59,436.00 53.19,436.00 53.19,436.00 56.78,436.00 56.78,436.00 60.38,436.00 60.38,436.00 63.97,436.00 63.97,436.00 67.56,436.00 67.56,436.00 71.16,436.00 71.16,436.96 74.75,436.96 74.75,437.03 78.34,437.03 78.34,437.05 81.94,437.05 81.94,437.08 85.53,437.08 85.53,437.11 89.12,437.11 89.12,437.13 92.72,437.13 92.72,437.16 96.31,437.16 96.31,437.19 99.91,437.19 99.91,438.00 103.50,438.00 103.50,438.00 107.09,438.00 107.09,438.00 110.69,438.00 110.69,438.00 114.28,438.00 114.28,438.00 117.88,438.00 117.88,438.00 121.47,438.00 121.47,438.00 125.06,438.00 125.06,438.00 128.66,438.00 128.66,438.00 132.25,438.00 132.25,438.00 135.84,438.00 135.84,438.00 139.44,438.00 139.44,438.00 143.03,438.00 143.03,438.00 146.62,438.00 146.62,438.00 150.22,438.00 150.22,438.00 153.81,438.00 153.81,438.00 157.41,438.00 157.41,438.00 161.00,438.00 161.00,438.00 164.59,438.00 164.59,438.00 168.19,438.00 168.19,438.00 171.78,438.00 171.78,438.00 175.38,438.00 175.38,438.00 178.97,438.00 178.97,438.00 182.56,438.00 182.56,438.00 186.16,438.00 186.16,438.00 189.75,438.00 189.75,438.00 193.34,438.00 193.34,438.00 196.94,438.00 196.94,438.00 200.53,438.00 200.53,437.95 204.12,437.95 204.12,437.87 207.72,437.87 207.72,437.79 211.31,437.79 211.31,437.71 214.91,437.71 214.91,437.63 218.50,437.63 218.50,437.55 222.09,437.55 222.09,437.47 225.69,437.47 225.69,437.39 229.28,437.39 229.28,437.31 232.88,437.31 232.88,437.23 236.47,437.23 236.47,437.15 240.06,437.15 240.06,437.07 243.66,437.07 243.66,436.92 247.25,436.92 247.25,436.29 250.84,436.29 250.84,435.65 254.44,435.65 254.44,435.02 258.03,435.02 258.03,434.38 261.62,434.38 261.62,433.94 265.22,433.94 265.22,433.79 268.81,433.79 268.81,433.63 272.41,433.63 272.41,433.48 276.00,433.48 276.00,433.32 279.59,433.32 279.59,433.17 283.19,433.17 283.19,433.01 286.78,433.01 286.78,432.86 290.38,432.86 290.38,432.80 293.97,432.80 293.97,432.80 297.56,432.80 297.56,432.80 301.16,432.80 301.16,432.80 304.75,432.80 304.75,432.80 308.34,432.80 308.34,432.91 311.94,432.91 311.94,433.27 315.53,433.27 315.53,433.63 319.12,433.63 319.12,433.94 322.72,433.94 322.72,434.08 326.31,434.08 326.31,434.22 329.91,434.22 329.91,434.36 333.50,434.36 333.50,434.50 337.09,434.50 337.09,434.64 340.69,434.64 340.69,434.79 344.28,434.79 344.28,434.93 347.88,434.93 347.88,435.07 351.47,435.07 351.47,435.20 355.06,435.20 355.06,435.20 358.66,435.20 358.66,435.20 362.25,435.20 362.25,435.20 365.84,435.20 365.84,435.20 369.44,435.20 369.44,435.20 373.03,435.20 373.03,435.20 376.62,435.20 376.62,435.20 380.22,435.20 380.22,435.20 383.81,435.20 383.81,435.20 387.41,435.20 387.41,435.20 391.00,435.20 391.00,435.20 394.59,435.20 394.59,435.20 398.19,435.20 398.19,435.20 401.78,435.20 401.78,435.20 405.38,435.20 405.38,435.20 408.97,435.20 408.97,435.20 412.56,435.20 412.56,435.20 416.16,435.20 416.16,435.20 419.75,435.20 419.75,435.20 423.34,435.20 423.34,435.20 426.94,435.20 426.94,435.20 430.53,435.20 430.53,435.20 434.12,435.20 434.12,435.20 437.72,435.20 437.72,435.20 441.31,435.20 441.31,435.20 444.91,435.20 444.91,435.20 448.50,435.20 448.50,435.20 452.09,435.20 452.09,435.20 455.69,435.20 455.69,435.20 459.28,435.20 459.28,435.20 462.88,435.20 462.88,435.20 466.47,435.20 466.47,435.20 470.06,435.20 470.06,435.20 473.66,435.20 473.66,435.20 477.25,435.20 477.25,435.20 480.84,435.20 480.84,435.20 484.44,435.20 484.44,435.20 488.03,435.20 488.03,435.20 491.62,435.20 491.62,435.20 495.22,435.20 495.22,435.20 498.81,435.20 498.81,435.20 502.41,435.20 502.41,435.20 506.00,435.20 506.00,435.20 509.59,435.20 509.59,435.20 513.19,435.20 513.19,435.20 516.78,435.20 516.78,435.20 520.38,435.20 520.38,435.20 523.97,435.20 523.97,435.20 527.56,435.20 527.56,435.20 531.16,435.20 531.16,435.20 534.75,435.20 534.75,435.20 538.34,435.20 538.34,435.20 541.94,435.20 541.94,435.20 545.53,435.20 545.53,435.20 549.12,435.20 549.12,435.20 552.72,435.20 552.72,435.20 556.31,435.20 556.31,435.20 559.91,435.20 559.91,435.20 563.50,435.20 563.50,435.20 567.09,435.20 567.09,435.20 570.69,435.20 570.69,435.20 574.28,435.20 574.28,435.20 577.88,435.20 577.88,435.20 581.47,435.20 581.47,435.20 585.06,435.20 585.06,435.20 588.66,435.20 588.66,435.21 592.25,435.21 592.25,435.30 595.84,435.30 595.84,435.40 599.44,435.40 599.44,435.49 603.03,435.49 603.03,435.58 606.62,435.58 606.62,435.68 610.22,435.68 610.22,435.77 613.81,435.77 613.81,435.86 617.41,435.86 617.41,435.95 621.00,435.95 621.00,439.00 46.00,439.00" fill="#1fe6ab"/>
<rect x="267" y="144" width="3" height="3.0" fill="#bb000c"/>
<rect x="267" y="151" width="3" height="3.0" fill="#bb000c"/>
<rect x="267" y="158" width="3" height="3.0" fill="#bb000c"/>
<rect x="267" y="165" width="3" height="3.0" fill="#bb000c"/>
<rect x="267" y="172" width="3" height="3.0" fill="#bb000c"/>
<rect x="267" y="179" width="3" height="3.0" fill="#bb000c"/>
<rect x="267" y="186" width="3" height="3.0" fill="#bb000c"/>
<rect x="267" y="193" width="3" height="3.0" fill="#bb000c"/>
<rect x="267" y="200" width="3" height="3.0" fill="#bb000c"/>
<rect x="267" y="207" width="3" height="3.0" fill="#bb000c"/>
<rect x="267" y="214" width="3" height="3.0" fill="#bb000c"/>
<rect x="267" y="221" width="3" height="3.0" fill="#bb000c"/>
<rect x="267" y="228" width="3" height="3.0" fill="#bb000c"/>
<rect x="267" y="235" width="3" height="3.0" fill="#bb000c"/>
<rect x="267" y="242" width="3" height="3.0" fill="#bb000c"/>
<rect x="267" y="249" width="3" height="3.0" fill="#bb000c"/>
<rect x="267" y="255" width="3" height="3.0" fill="#bb000c"/>
<rect x="267" y="262" width="3" height="3.0" fill="#bb000c"/>
<rect x="267" y="269" width="3" height="3.0" fill="#bb000c"/>
<rect x="267" y="276" width="3" height="3.0" fill="#bb000c"/>
<rect x="267" y="283" width="3" height="3.0" fill="#bb000c"/>
<rect x="267" y="290" width="3" height="3.0" fill="#bb000c"/>
<rect x="267" y="297" width="3" height="3.0" fill="#bb000c"/>
<rect x="267" y="304" width="3" height="3.0" fill="#bb000c"/>
<rect x="267" y="311" width="3" height="3.0" fill="#bb000c"/>
<rect x="267" y="318" width="3" height="3.0" fill="#bb000c"/>
<rect x="267" y="325" width="3" height="3.0" fill="#bb000c"/>
<rect x="267" y="332" width="3" height="3.0" fill="#bb000c"/>
<rect x="267" y="339" width="3" height="3.0" fill="#bb000c"/>
<rect x="267" y="346" width="3" height="3.0" fill="#bb000c"/>
<rect x="267" y="353" width="3" height="3.0" fill="#bb000c"/>
<rect x="267" y="360" width="3" height="3.0" fill="#bb000c"/>
<rect x="267" y="367" width="3" height="3.0" fill="#bb000c"/>
<rect x="267" y="374" width="3" height="3.0" fill="#bb000c"/>
<rect x="267" y="381" width="3" height="3.0" fill="#bb000c"/>
<rect x="267" y="388" width="3" height="3.0" fill="#bb000c"/>
<rect x="267" y="395" width="3" height="3.0" fill="#bb000c"/>
<rect x="267" y="402" width="3" height="3.0" fill="#bb000c"/>
<rect x="267" y="408" width="3" height="3.0" fill="#bb000c"/>
<rect x="267" y="415" width="3" height="3.0" fill="#bb000c"/>
<rect x="267" y="422" width="3" height="3.0" fill="#bb000c"/>
<rect x="267" y="429" width="3" height="3.0" fill="#bb000c"/>
<rect x="267" y="436" width="3" height="3.0" fill="#bb000c"/>
<rect x="630.5" y="144.5" width="109" height="295" fill="#fff" stroke="#6e6e6e" stroke-width="1"/>
<svg x="631" y="145" width="102.5" height="294" overflow="hidden">
<rect x="6" y="8.00" width="28" height="10.8" fill="#b01c02"/>
<text x="43" y="18.00" class="lg">* (0)</text>
<rect x="6" y="23.54" width="28" height="10.8" fill="#e2490c"/>
<text x="43" y="33.54" class="lg">Travail (2990)</text>
<rect x="6" y="39.08" width="28" height="10.8" fill="#fb8b27"/>
<text x="43" y="49.08" class="lg">Achats (1370)</text>
<rect x="6" y="54.62" width="28" height="10.8" fill="#f1c43b"/>
<text x="43" y="64.62" class="lg">Autres (56)</text>
<rect x="6" y="70.16" width="28" height="10.8" fill="#bdf234"/>
<text x="43" y="80.16" class="lg">Loisirs (626)</text>
<rect x="6" y="85.70" width="28" height="10.8" fill="#6efc5f"/>
<text x="43" y="95.70" class="lg">Domicile (1900)</text>
<rect x="6" y="101.24" width="28" height="10.8" fill="#1fe6ab"/>
<text x="43" y="111.24" class="lg">Études (96)</text>
<rect x="6" y="116.78" width="28" height="10.8" fill="#2db8ee"/>
<text x="43" y="126.78" class="lg">Formation (0)</text>
<rect x="6" y="132.32" width="28" height="10.8" fill="#4a7aec"/>
<text x="43" y="142.32" class="lg">Enseignement</text>
<rect x="6" y="147.86" width="28" height="10.8" fill="#3c3a8d"/>
<text x="43" y="157.86" class="lg">École primaire</text>
</svg>
<text transform="translate(52.2,446.3) rotate(45)" class="xl b">00:00</text>
<text transform="translate(92.4,446.3) rotate(45)" class="xl">02:00</text>
<text transform="translate(140.5,446.3) rotate(45)" class="xl">04:00</text>
<text transform="translate(188.7,446.3) rotate(45)" class="xl">06:00</text>
<text transform="translate(236.8,446.3) rotate(45)" class="xl">08:00</text>
<text transform="translate(285.0,446.3) rotate(45)" class="xl">10:00</text>
<text transform="translate(333.1,446.3) rotate(45)" class="xl">12:00</text>
<text transform="translate(381.2,446.3) rotate(45)" class="xl">14:00</text>
<text transform="translate(429.4,446.3) rotate(45)" class="xl">16:00</text>
<text transform="translate(477.5,446.3) rotate(45)" class="xl">18:00</text>
<text transform="translate(525.7,446.3) rotate(45)" class="xl">20:00</text>
<text transform="translate(573.8,446.3) rotate(45)" class="xl">22:00</text>
<text transform="translate(621.9,446.3) rotate(45)" class="xl b">24:00</text>

<rect x="46" y="514.5" width="584" height="294.5" fill="#fff"/>
<text x="48" y="507" class="ttl">Vue détaillée (Classe : « Travail »), instant : 09:14</text>
<text x="43" y="518" class="yl">0</text>
<text x="43" y="587.6" class="yl">5</text>
<text x="43" y="657.4" class="yl">10</text>
<text x="43" y="726.9" class="yl">15</text>
<text x="43" y="796.7" class="yl">20</text>
<svg x="46" y="514.5" width="584" height="294.5" overflow="hidden"><g transform="translate(-46,-514.5)">
<rect x="108.7" y="515.8" width="172.2" height="10.8" fill="#e2490c"/>
<rect x="110.5" y="529.7" width="206.2" height="10.8" fill="#e2490c"/>
<rect x="143.7" y="543.6" width="151.9" height="10.8" fill="#e2490c"/>
<rect x="146.3" y="557.5" width="167.6" height="10.8" fill="#e2490c"/>
<rect x="147.1" y="571.4" width="146.6" height="10.8" fill="#e2490c"/>
<rect x="151.2" y="585.3" width="214.4" height="10.8" fill="#e2490c"/>
<rect x="156.4" y="599.2" width="146.3" height="10.8" fill="#e2490c"/>
<rect x="162.0" y="613.1" width="110.5" height="10.8" fill="#e2490c"/>
<rect x="164.1" y="627.0" width="106.7" height="10.8" fill="#e2490c"/>
<rect x="165.8" y="640.9" width="161.0" height="10.8" fill="#e2490c"/>
<rect x="166.9" y="654.8" width="103.9" height="10.8" fill="#e2490c"/>
<rect x="166.9" y="668.7" width="105.8" height="10.8" fill="#e2490c"/>
<rect x="166.9" y="682.6" width="127.9" height="10.8" fill="#e2490c"/>
<rect x="166.9" y="696.5" width="106.6" height="10.8" fill="#e2490c"/>
<rect x="166.9" y="710.4" width="117.7" height="10.8" fill="#e2490c"/>
<rect x="166.9" y="724.3" width="176.8" height="10.8" fill="#e2490c"/>
<rect x="167.9" y="738.2" width="139.8" height="10.8" fill="#e2490c"/>
<rect x="167.9" y="752.1" width="182.1" height="10.8" fill="#e2490c"/>
<rect x="167.9" y="766.0" width="135.2" height="10.8" fill="#e2490c"/>
<rect x="167.9" y="779.9" width="163.6" height="10.8" fill="#e2490c"/>
<rect x="167.9" y="793.8" width="199.4" height="10.8" fill="#e2490c"/>
<rect x="169.2" y="807.7" width="108.9" height="10.8" fill="#e2490c"/>
</g></svg>
<rect x="267" y="515" width="3" height="3.0" fill="#bb000c"/>
<rect x="267" y="522" width="3" height="3.0" fill="#bb000c"/>
<rect x="267" y="529" width="3" height="3.0" fill="#bb000c"/>
<rect x="267" y="536" width="3" height="3.0" fill="#bb000c"/>
<rect x="267" y="543" width="3" height="3.0" fill="#bb000c"/>
<rect x="267" y="550" width="3" height="3.0" fill="#bb000c"/>
<rect x="267" y="557" width="3" height="3.0" fill="#bb000c"/>
<rect x="267" y="563" width="3" height="3.0" fill="#bb000c"/>
<rect x="267" y="570" width="3" height="3.0" fill="#bb000c"/>
<rect x="267" y="577" width="3" height="3.0" fill="#bb000c"/>
<rect x="267" y="584" width="3" height="3.0" fill="#bb000c"/>
<rect x="267" y="591" width="3" height="3.0" fill="#bb000c"/>
<rect x="267" y="598" width="3" height="3.0" fill="#bb000c"/>
<rect x="267" y="605" width="3" height="3.0" fill="#bb000c"/>
<rect x="267" y="612" width="3" height="3.0" fill="#bb000c"/>
<rect x="267" y="619" width="3" height="3.0" fill="#bb000c"/>
<rect x="267" y="626" width="3" height="3.0" fill="#bb000c"/>
<rect x="267" y="633" width="3" height="3.0" fill="#bb000c"/>
<rect x="267" y="640" width="3" height="3.0" fill="#bb000c"/>
<rect x="267" y="647" width="3" height="3.0" fill="#bb000c"/>
<rect x="267" y="654" width="3" height="3.0" fill="#bb000c"/>
<rect x="267" y="661" width="3" height="3.0" fill="#bb000c"/>
<rect x="267" y="668" width="3" height="3.0" fill="#bb000c"/>
<rect x="267" y="675" width="3" height="3.0" fill="#bb000c"/>
<rect x="267" y="682" width="3" height="3.0" fill="#bb000c"/>
<rect x="267" y="689" width="3" height="3.0" fill="#bb000c"/>
<rect x="267" y="696" width="3" height="3.0" fill="#bb000c"/>
<rect x="267" y="703" width="3" height="3.0" fill="#bb000c"/>
<rect x="267" y="710" width="3" height="3.0" fill="#bb000c"/>
<rect x="267" y="716" width="3" height="3.0" fill="#bb000c"/>
<rect x="267" y="723" width="3" height="3.0" fill="#bb000c"/>
<rect x="267" y="730" width="3" height="3.0" fill="#bb000c"/>
<rect x="267" y="737" width="3" height="3.0" fill="#bb000c"/>
<rect x="267" y="744" width="3" height="3.0" fill="#bb000c"/>
<rect x="267" y="751" width="3" height="3.0" fill="#bb000c"/>
<rect x="267" y="758" width="3" height="3.0" fill="#bb000c"/>
<rect x="267" y="765" width="3" height="3.0" fill="#bb000c"/>
<rect x="267" y="772" width="3" height="3.0" fill="#bb000c"/>
<rect x="267" y="779" width="3" height="3.0" fill="#bb000c"/>
<rect x="267" y="786" width="3" height="3.0" fill="#bb000c"/>
<rect x="267" y="793" width="3" height="3.0" fill="#bb000c"/>
<rect x="267" y="800" width="3" height="3.0" fill="#bb000c"/>
<rect x="267" y="807" width="3" height="2.0" fill="#bb000c"/>
<rect x="630.5" y="514.5" width="109" height="295" fill="#fff" stroke="#6e6e6e" stroke-width="1"/>
<svg x="631" y="515" width="102.5" height="294" overflow="hidden">
<rect x="6" y="8.00" width="28" height="10.8" fill="#b01c02"/>
<text x="43" y="18.00" class="lg">*</text>
<rect x="6" y="23.54" width="28" height="10.8" fill="#e2490c"/>
<text x="43" y="33.54" class="lg">Travail</text>
<rect x="6" y="39.08" width="28" height="10.8" fill="#fb8b27"/>
<text x="43" y="49.08" class="lg">Achats</text>
<rect x="6" y="54.62" width="28" height="10.8" fill="#f1c43b"/>
<text x="43" y="64.62" class="lg">Autres</text>
<rect x="6" y="70.16" width="28" height="10.8" fill="#bdf234"/>
<text x="43" y="80.16" class="lg">Loisirs</text>
<rect x="6" y="85.70" width="28" height="10.8" fill="#6efc5f"/>
<text x="43" y="95.70" class="lg">Domicile</text>
<rect x="6" y="101.24" width="28" height="10.8" fill="#1fe6ab"/>
<text x="43" y="111.24" class="lg">Études</text>
<rect x="6" y="116.78" width="28" height="10.8" fill="#2db8ee"/>
<text x="43" y="126.78" class="lg">Formation</text>
<rect x="6" y="132.32" width="28" height="10.8" fill="#4a7aec"/>
<text x="43" y="142.32" class="lg">Enseignement</text>
<rect x="6" y="147.86" width="28" height="10.8" fill="#3c3a8d"/>
<text x="43" y="157.86" class="lg">École primaire</text>
</svg>
<text transform="translate(52.2,816.5) rotate(45)" class="xl b">00:00</text>
<text transform="translate(92.4,816.5) rotate(45)" class="xl">02:00</text>
<text transform="translate(140.5,816.5) rotate(45)" class="xl">04:00</text>
<text transform="translate(188.7,816.5) rotate(45)" class="xl">06:00</text>
<text transform="translate(236.8,816.5) rotate(45)" class="xl">08:00</text>
<text transform="translate(285.0,816.5) rotate(45)" class="xl">10:00</text>
<text transform="translate(333.1,816.5) rotate(45)" class="xl">12:00</text>
<text transform="translate(381.2,816.5) rotate(45)" class="xl">14:00</text>
<text transform="translate(429.4,816.5) rotate(45)" class="xl">16:00</text>
<text transform="translate(477.5,816.5) rotate(45)" class="xl">18:00</text>
<text transform="translate(525.7,816.5) rotate(45)" class="xl">20:00</text>
<text transform="translate(573.8,816.5) rotate(45)" class="xl">22:00</text>
<text transform="translate(621.9,816.5) rotate(45)" class="xl b">24:00</text>
<defs><pattern id="dots" x="267" y="144" width="3" height="7" patternUnits="userSpaceOnUse"><rect x="0" y="0" width="3" height="3" fill="#bb000c"/></pattern><pattern id="dots2" x="267" y="143" width="3" height="7" patternUnits="userSpaceOnUse"><rect x="0" y="0" width="3" height="3" fill="#bb000c"/></pattern></defs>
</svg>
</body></html>
